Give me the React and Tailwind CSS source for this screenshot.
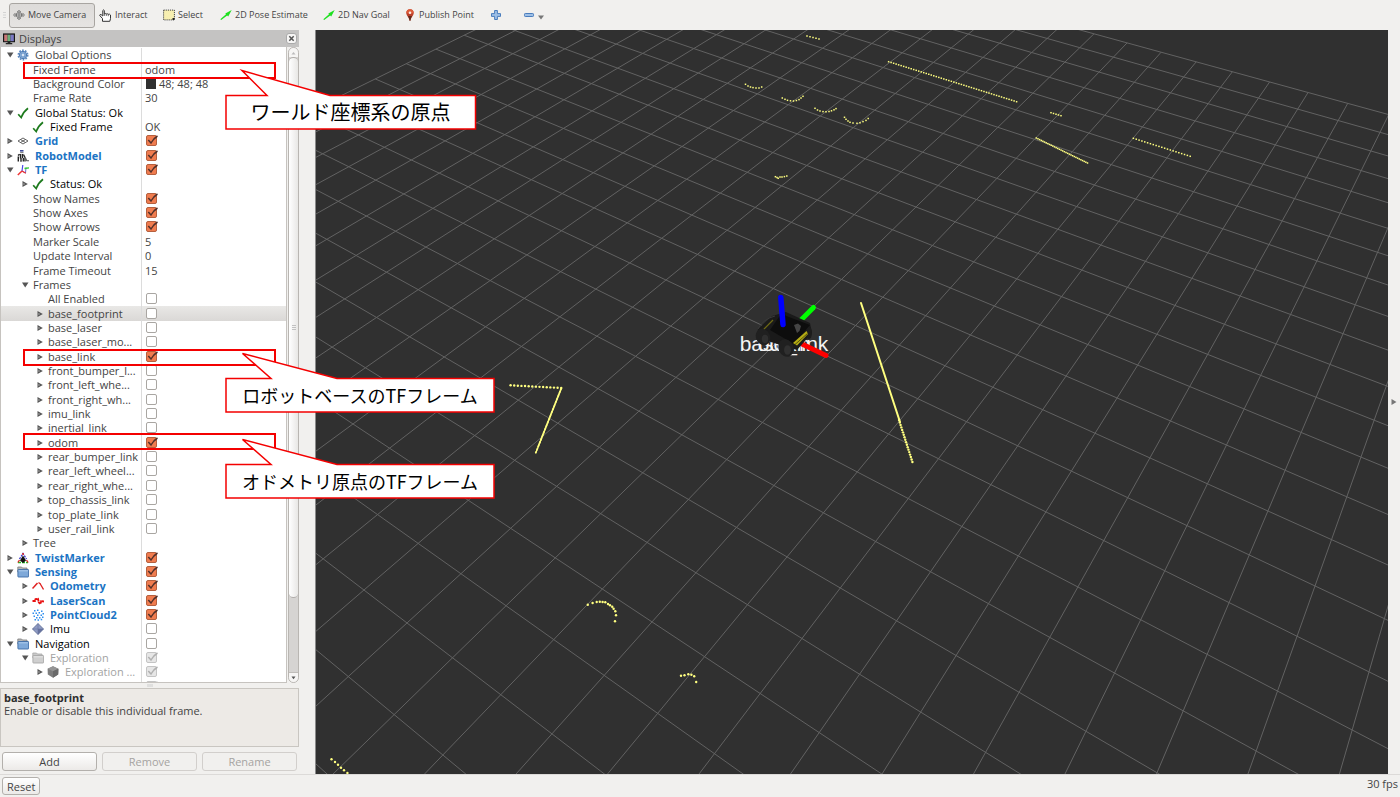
import React from "react";

/* ---------- 3D view ---------- */

// Perspective of the ground plane: grid cell (i, j) -> view coordinates.
function project(i, j) {
  const w = -0.0305002 * i + 0.0462399 * j + 1;
  return [
    850 + (400 * (0.1545719 * i + 0.1021849 * j - 0.7451531)) / w,
    400 + (400 * (0.075397 * i - 0.1142941 * j + 0.8346067)) / w,
  ];
}

const I_MIN = -17;
const I_MAX = 12;
const J_MIN = -4;
const J_MAX = 23;

const gridLines = [];
for (let j = J_MIN; j <= J_MAX; j++) gridLines.push([project(I_MIN, j), project(I_MAX, j)]);
for (let i = I_MIN; i <= I_MAX; i++) gridLines.push([project(i, J_MIN), project(i, J_MAX)]);

function dots(x1, y1, x2, y2, n) {
  return Array.from({ length: n }, (_, k) => [
    x1 + ((x2 - x1) * k) / (n - 1),
    y1 + ((y2 - y1) * k) / (n - 1),
  ]);
}

const smallPoints = [
  ...dots(807, 36, 819, 39, 5),
  [745.5, 84.3], [748, 86], [750.5, 87], [753, 87.6], [756, 88], [759, 88], [761.7, 87],
  [782.3, 98], [785, 99.3], [787.5, 100.3], [790.5, 100.8], [793.5, 101], [796.4, 100.5], [799, 99.6], [801, 98], [803, 96.3],
  [815, 108.3], [817.5, 110], [820, 111], [823, 111.6], [826, 111.8], [829, 111.5], [831.5, 110.8], [834, 109.8], [836, 108.6],
  [844.5, 117.3], [846, 119.3], [848, 121], [850, 122.3], [853, 123], [857, 123.3], [860, 122.8], [863, 121.6], [866, 120.4], [868.2, 118.5],
  [775.4, 176.7], [777, 177.5], [778.2, 178.3], [780, 177], [782, 177], [784.4, 176.6], [786.8, 176],
  ...dots(888.6, 61.7, 1016.6, 101.7, 52),
  ...dots(1051, 112.7, 1061, 115.7, 5),
  ...dots(1036.3, 138, 1087.5, 163, 32),
  ...dots(1133.4, 138.3, 1190.2, 156.3, 21),
];

const bigPoints = [
  ...dots(510.6, 385.3, 561.2, 388, 15),
  ...dots(899, 420, 912.4, 462, 18),
  [587.8, 604.7], [592.6, 603], [596.7, 602], [599.8, 601.7], [602.6, 602], [605.3, 602.3], [608, 604],
  [610, 605.3], [612.2, 606.7], [613.6, 608.7], [615.3, 611.3], [616, 615.3], [615, 621.3],
  [681, 675.7], [684.5, 675.3], [688.3, 674.3], [691.4, 674.7], [694.2, 676.3], [696.2, 682],
  [331.5, 759.3], [335, 762], [338, 764.7], [341, 767.7], [344, 770.3], [347.4, 773],
];

function Viewport() {
  return (
    <svg
      className="block h-full w-full bg-[#303030]"
      viewBox="316 30 1072 744"
      preserveAspectRatio="xMidYMid slice"
      role="img"
      aria-label="3D view"
    >
      <g stroke="#626262" strokeWidth="1">
        {gridLines.map(([a, b], k) => (
          <line key={k} x1={a[0]} y1={a[1]} x2={b[0]} y2={b[1]} />
        ))}
      </g>
      <g fill="#ffff80">
        {smallPoints.map(([x, y], k) => (
          <rect key={k} x={x - 0.75} y={y - 0.75} width="1.5" height="1.5" />
        ))}
        {bigPoints.map(([x, y], k) => (
          <circle key={k} cx={x} cy={y} r="1.2" />
        ))}
      </g>
      <g stroke="#ffff80" strokeLinecap="round">
        <line x1="861" y1="303" x2="900" y2="422" strokeWidth="2" />
        <line x1="561.4" y1="388" x2="535.8" y2="452.7" strokeWidth="1.8" strokeDasharray="2 1.6" />
        <line x1="561.4" y1="388" x2="538" y2="447" strokeWidth="1.2" />
      </g>

      <g fill="#f4f4f4" fontFamily="'Liberation Sans', sans-serif" fontSize="21" textAnchor="middle">
        <text x="784" y="351">base_link</text>
        <text x="784" y="351">odom</text>
      </g>
      {/* robot */}
      <line x1="803" y1="344.5" x2="826" y2="355.5" stroke="#f00" strokeWidth="5" strokeLinecap="round" />
      <line x1="800" y1="321" x2="813.5" y2="307.5" stroke="#0f0" strokeWidth="5" strokeLinecap="round" />
      <path d="M758 329 L772 316 L786 312 L810 323 L812 333 L797 350 L774 343 L757 338 Z" fill="#1a1a1a" />
      <path d="M770 330 L781 314 L810 325 L794 344 Z" fill="#0d0d0d" />
      <path d="M758 329 Q763 319 775 316" fill="none" stroke="#3a3a3a" strokeWidth="1" />
      <path d="M762 331 L773 320" stroke="#6f6a14" strokeWidth="1.2" />
      <ellipse cx="763" cy="337" rx="7" ry="8.5" fill="#202020" transform="rotate(-25 763 337)" />
      <ellipse cx="765" cy="339" rx="3.2" ry="4.2" fill="#2f2f2f" />
      <ellipse cx="786" cy="348" rx="7.5" ry="9" fill="#202020" transform="rotate(-25 786 348)" />
      <ellipse cx="787.5" cy="350" rx="3.4" ry="4.8" fill="#303030" />
      <ellipse cx="809" cy="333" rx="3" ry="6" fill="#1c1c1c" />
      <path d="M793 343 L806.5 331 L808 334 L797 345.5 Z" fill="#b4ac14" />
      <path d="M795 344.5 L807.5 333.5" stroke="#3c3a0c" strokeWidth="0.8" />
      <path d="M794 325 L798 323.5 L801 326 L799.5 331 L797 333 L795.5 329 Z" fill="#454545" />
      <line x1="780.8" y1="297.5" x2="783" y2="324.5" stroke="#00f" strokeWidth="5.5" strokeLinecap="round" />
    </svg>
  );
}

/* ---------- icons ---------- */

const box = { className: "block h-3 w-3 shrink-0", viewBox: "0 0 12 12", fill: "none", "aria-hidden": true };

function CheckMark() {
  return <svg {...box}><path d="M1.2 7.2 L4.2 10.5 Q6.5 4.5 11 1.2" stroke="#1d7a1d" strokeWidth="1.7" /></svg>;
}
function GearIcon() {
  return (
    <svg {...box}>
      <circle cx="6" cy="6" r="4.7" stroke="#5b89c0" strokeWidth="1.6" strokeDasharray="1.7 1.25" />
      <circle cx="6" cy="6" r="3.7" fill="#8fb3dc" stroke="#4c7ab3" strokeWidth="1" />
      <path d="M3 6 H9 M6 3 V9 M4 4 L8 8 M8 4 L4 8" stroke="#5b89c0" strokeWidth="0.6" />
      <circle cx="6" cy="6" r="1.2" fill="#dbe7f5" />
    </svg>
  );
}
function GridIcon() {
  return (
    <svg {...box}>
      <path d="M1 6 L6 3 L11 6 L6 9 Z M3.5 4.5 L8.5 7.5 M8.5 4.5 L3.5 7.5" stroke="#555" strokeWidth="0.9" />
    </svg>
  );
}
function RobotIcon() {
  return (
    <svg {...box}>
      <rect x="3" y="0" width="3.5" height="1.6" fill="#3a4a9a" />
      <path d="M3.2 2.6 H6.5" stroke="#777" strokeWidth="1" />
      <path d="M1 5.5 L2.5 4.2 M3.5 4 V8.5 M5.5 4 V8 M1.3 6.5 V11.5 M4 8 V11.8" stroke="#222" strokeWidth="1.4" />
      <path d="M6.5 4.5 L8 7.5 V11.5 M6.3 8 V11.5" stroke="#222" strokeWidth="1.3" />
      <path d="M8.5 8 L9.8 10.8 H12" stroke="#555" strokeWidth="1.1" />
    </svg>
  );
}
function TfIcon() {
  return (
    <svg {...box}>
      <path d="M5 7 L5.8 1" stroke="#4a4ae8" strokeWidth="1.2" />
      <path d="M5 7 L0.8 11" stroke="#e33" strokeWidth="1.5" />
      <path d="M5 7 L8.5 9 L9 3.5" stroke="#55c" strokeWidth="0.9" />
      <path d="M5 7 L8.8 9.2" stroke="#e33" strokeWidth="1.3" />
      <path d="M7.5 4.5 L12 3.8" stroke="#3c3" strokeWidth="1.3" />
    </svg>
  );
}
function TwistIcon() {
  return (
    <svg {...box}>
      <path d="M2.5 7 L6 1.5 L9.5 7" stroke="#33c" strokeWidth="1.3" strokeDasharray="2 1" />
      <path d="M1 10.5 H11" stroke="#2b2" strokeWidth="1.5" strokeDasharray="3 1" />
      <path d="M3 8.5 L6 3.5 L9 8.5 L6 11 Z" fill="#111" />
      <path d="M0.8 10.5 L2.5 8 M11.2 10.5 L9.5 8 M5 2 H7" stroke="#d22" strokeWidth="1.3" />
    </svg>
  );
}
function FolderIcon({ gray }) {
  return (
    <svg {...box}>
      <path d="M0.8 1 H4.5 L5.5 2 H10 V6 H0.8 Z" fill={gray ? "#c9c9c9" : "#b8b8b8"} stroke={gray ? "#a8a8a8" : "#7c7c7c"} strokeWidth="0.8" />
      <rect x="0.9" y="3.5" width="10.7" height="7.5" rx="0.6" fill={gray ? "#cfcfcf" : "#7fa9d9"} stroke={gray ? "#a8a8a8" : "#3d6ca6"} strokeWidth="0.9" />
      <path d="M1.6 4.8 H10.9" stroke={gray ? "#e6e6e6" : "#b4d0ee"} strokeWidth="0.9" />
    </svg>
  );
}
function OdometryIcon() {
  return (
    <svg {...box}>
      <path d="M0.5 8.5 L5.5 3" stroke="#e02020" strokeWidth="1.5" />
      <path d="M6.5 2.5 L8.5 4 M8 3.5 L11.5 9.5" stroke="#e02020" strokeWidth="1.3" />
    </svg>
  );
}
function LaserIcon() {
  return <svg {...box}><path d="M0.5 6 H3 L3.5 4 L6 3.8 L6.8 7.5 L8.5 8.8 L9.2 6 L12 6.5" stroke="#e81010" strokeWidth="1.8" strokeDasharray="3 0.3" /></svg>;
}
function CloudIcon() {
  return (
    <svg {...box}>
      <g fill="#2f8eee">
        {[[2, 1], [5, 0.5], [9, 1.5], [0.5, 3.5], [3.5, 3.5], [6.5, 3], [10.5, 4], [5, 5.5], [8.5, 5.5], [1.5, 6.5], [4, 8], [7, 8], [10, 7.5], [2.5, 10], [5.5, 10.3], [8.7, 9.8]].map(([x, y], k) => (
          <rect key={k} x={x} y={y} width="1.5" height="1.5" />
        ))}
      </g>
    </svg>
  );
}
function ImuIcon() {
  return (
    <svg {...box}>
      <path d="M6 0.5 L11.5 6 L6 11.5 L0.5 6 Z" fill="#8f9bc4" stroke="#5c678f" strokeWidth="0.8" />
      <path d="M6 0.5 L6 6 L0.5 6 M6 6 L11.5 6 M6 6 L6 11.5" stroke="#6a75a0" strokeWidth="0.6" />
      <path d="M6 6 L11.5 6 L6 11.5 Z" fill="#66729e" />
    </svg>
  );
}
function CubeIcon() {
  return (
    <svg {...box}>
      <path d="M6 0.3 L11.4 2.8 L11.2 8.5 L6 11.8 L0.8 8.5 L0.6 2.8 Z" fill="#7d7d7d" />
      <path d="M6 0.3 L11.4 2.8 L6 5.3 L0.6 2.8 Z" fill="#959595" />
      <path d="M6 5.3 V11.8 L11.2 8.5 L11.4 2.8 Z" fill="#6a6a6a" />
    </svg>
  );
}
function MapIcon() {
  return <svg {...box}><path d="M0 1 H6 V12 H0 Z M8 1 H11 V12 H8 Z" fill="#8a8a8a" /></svg>;
}
function DisplaysIcon() {
  return (
    <svg className="block h-3 w-3 shrink-0" viewBox="0 0 13 12" aria-hidden="true">
      <rect x="0.5" y="0.5" width="12" height="8.5" fill="#222" stroke="#111" />
      <rect x="1.3" y="1.3" width="3.6" height="7" fill="#c97878" />
      <rect x="4.9" y="1.3" width="3.2" height="7" fill="#6fae78" />
      <rect x="8.1" y="1.3" width="3.6" height="7" fill="#7a78c4" />
      <path d="M5 9 H8 V10.3 H10 V11.7 H3 V10.3 H5 Z" fill="#222" />
    </svg>
  );
}
function MoveIcon() {
  return (
    <svg className="h-3 w-3 shrink-0" viewBox="0 0 14 12" fill="none" aria-hidden="true">
      <path d="M7 0.5 L9 2.3 H5 Z M7 11.5 L9 9.7 H5 Z M0.5 6 L2.5 4.2 V7.8 Z M13.5 6 L11.5 4.2 V7.8 Z" fill="#fff" stroke="#555" strokeWidth="0.8" />
      <rect x="4.2" y="3.6" width="5.6" height="4.8" rx="1" fill="#ddd" stroke="#555" strokeWidth="0.9" />
      <circle cx="7" cy="6" r="1.3" stroke="#555" strokeWidth="0.8" />
      <path d="M3 5 H4.2 M3 7 H4.2 M9.8 5 H11 M9.8 7 H11" stroke="#555" strokeWidth="0.7" />
    </svg>
  );
}
function HandIcon() {
  return (
    <svg className="h-[13px] w-[13px] shrink-0" viewBox="0 0 13 13" aria-hidden="true">
      <path d="M3.5 12.3 V9.5 L0.7 6.5 Q0.6 5.2 2.2 5.7 L3.8 7 V1.5 Q4.5 0.3 5.3 1.5 V5 Q6.2 4 7.2 5 Q8.2 4.3 9.2 5.3 Q10.5 4.7 11.5 6 V9.5 L10.8 12.3 Z" fill="#fff" stroke="#333" strokeWidth="1" />
      <path d="M5.3 5 V7 M7.3 5.2 V7 M9.3 5.5 V7.2" stroke="#333" strokeWidth="0.7" />
    </svg>
  );
}
function SelectIcon() {
  return (
    <svg className="h-3 w-3 shrink-0" viewBox="0 0 12 12" aria-hidden="true">
      <rect x="0.6" y="1.1" width="10.8" height="9.8" fill="#f7efb0" stroke="#444" strokeWidth="1" strokeDasharray="1.2 0.9" />
      <rect x="9.5" y="9" width="2" height="2" fill="#222" />
    </svg>
  );
}
function ArrowIcon() {
  return (
    <svg className="h-3 w-3 shrink-0" viewBox="0 0 12 12" aria-hidden="true">
      <path d="M0.3 10.3 L6 5.2 L5.3 4.4 L11.7 1 L8.2 7.4 L7.2 6.4 L1.2 11 Z" fill="#1fe01f" />
    </svg>
  );
}
function PinIcon() {
  return (
    <svg className="h-3 w-2 shrink-0" viewBox="0 0 8 12" aria-hidden="true">
      <path d="M4 0.3 C1.5 0.3 0.3 2 0.3 3.9 C0.3 6.5 3 8 3.6 11.8 H4.4 C5 8 7.7 6.5 7.7 3.9 C7.7 2 6.5 0.3 4 0.3 Z" fill="#b9402a" />
      <path d="M0.3 3.9 C0.3 2 1.5 0.3 4 0.3 C6.5 0.3 7.7 2 7.7 3.9 Q4 5.5 0.3 3.9 Z" fill="#dd5a38" />
      <path d="M2 7 Q3.3 9 3.6 11.8 H4.4 Q4.7 9 6 7 Z" fill="#5e2a1c" />
      <circle cx="4" cy="3.7" r="1.3" fill="#fbe9e4" />
    </svg>
  );
}
function PlusIcon() {
  return (
    <svg className="h-3 w-3 shrink-0" viewBox="0 0 12 12" aria-hidden="true">
      <path d="M4.6 1.5 H7.4 V4.6 H10.5 V7.4 H7.4 V10.5 H4.6 V7.4 H1.5 V4.6 H4.6 Z" fill="#9dbfe6" stroke="#4a7dbd" strokeWidth="1" strokeLinejoin="round" />
    </svg>
  );
}
function MinusIcon() {
  return (
    <svg className="h-3 w-3 shrink-0" viewBox="0 0 12 12" aria-hidden="true">
      <rect x="1.5" y="4.5" width="9" height="3" rx="0.8" fill="#9dbfe6" stroke="#4a7dbd" strokeWidth="1" />
    </svg>
  );
}

/* ---------- display tree ---------- */

const rows = [
  { d: 0, arrow: "open", icon: <GearIcon />, name: "Global Options" },
  { d: 1, name: "Fixed Frame", value: "odom" },
  { d: 1, name: "Background Color", value: "48; 48; 48", swatch: true },
  { d: 1, name: "Frame Rate", value: "30" },
  { d: 0, arrow: "open", icon: <CheckMark />, name: "Global Status: Ok", tone: "black" },
  { d: 1, icon: <CheckMark />, name: "Fixed Frame", tone: "black", value: "OK" },
  { d: 0, arrow: "closed", icon: <GridIcon />, name: "Grid", tone: "blue", check: true },
  { d: 0, arrow: "closed", icon: <RobotIcon />, name: "RobotModel", tone: "blue", check: true },
  { d: 0, arrow: "open", icon: <TfIcon />, name: "TF", tone: "blue", check: true },
  { d: 1, arrow: "closed", icon: <CheckMark />, name: "Status: Ok", tone: "black" },
  { d: 1, name: "Show Names", check: true },
  { d: 1, name: "Show Axes", check: true },
  { d: 1, name: "Show Arrows", check: true },
  { d: 1, name: "Marker Scale", value: "5" },
  { d: 1, name: "Update Interval", value: "0" },
  { d: 1, name: "Frame Timeout", value: "15" },
  { d: 1, arrow: "open", name: "Frames" },
  { d: 2, name: "All Enabled", check: false },
  { d: 2, arrow: "closed", name: "base_footprint", check: false, selected: true },
  { d: 2, arrow: "closed", name: "base_laser", check: false },
  { d: 2, arrow: "closed", name: "base_laser_mo...", check: false },
  { d: 2, arrow: "closed", name: "base_link", check: true },
  { d: 2, arrow: "closed", name: "front_bumper_l...", check: false },
  { d: 2, arrow: "closed", name: "front_left_whe...", check: false },
  { d: 2, arrow: "closed", name: "front_right_wh...", check: false },
  { d: 2, arrow: "closed", name: "imu_link", check: false },
  { d: 2, arrow: "closed", name: "inertial_link", check: false },
  { d: 2, arrow: "closed", name: "odom", check: true },
  { d: 2, arrow: "closed", name: "rear_bumper_link", check: false },
  { d: 2, arrow: "closed", name: "rear_left_wheel...", check: false },
  { d: 2, arrow: "closed", name: "rear_right_whe...", check: false },
  { d: 2, arrow: "closed", name: "top_chassis_link", check: false },
  { d: 2, arrow: "closed", name: "top_plate_link", check: false },
  { d: 2, arrow: "closed", name: "user_rail_link", check: false },
  { d: 1, arrow: "closed", name: "Tree" },
  { d: 0, arrow: "closed", icon: <TwistIcon />, name: "TwistMarker", tone: "blue", check: true },
  { d: 0, arrow: "open", icon: <FolderIcon />, name: "Sensing", tone: "blue", check: true },
  { d: 1, arrow: "closed", icon: <OdometryIcon />, name: "Odometry", tone: "blue", check: true },
  { d: 1, arrow: "closed", icon: <LaserIcon />, name: "LaserScan", tone: "blue", check: true },
  { d: 1, arrow: "closed", icon: <CloudIcon />, name: "PointCloud2", tone: "blue", check: true },
  { d: 1, arrow: "closed", icon: <ImuIcon />, name: "Imu", tone: "black", check: false },
  { d: 0, arrow: "open", icon: <FolderIcon />, name: "Navigation", tone: "black", check: false },
  { d: 1, arrow: "open", icon: <FolderIcon gray />, name: "Exploration", tone: "gray", check: true, disabled: true },
  { d: 2, arrow: "closed", icon: <CubeIcon />, name: "Exploration ...", tone: "gray", check: true, disabled: true },
  { d: 2, icon: <MapIcon />, name: "Exploration ...", tone: "gray", check: true, disabled: true },
];

const indent = ["pl-[3px]", "pl-[18px]", "pl-[33px]"];
const tones = {
  black: "text-black",
  blue: "font-bold text-[#1b74c4]",
  gray: "text-[#a3a3a3]",
};

function Expander({ state }) {
  return (
    <svg className="block h-[10px] w-3 shrink-0" viewBox="0 0 12 10" aria-hidden="true">
      {state === "open" && <path d="M3 2.5 H9.5 L6.2 7.5 Z" fill="#555" />}
      {state === "closed" && (
        <>
          <path d="M3.5 2 L8.8 5 L3.5 8 Z" fill="#555" />
          <path d="M4.5 4 L6 5 L4.5 6 Z" fill="#bbb" />
        </>
      )}
    </svg>
  );
}

function Check({ label, on, disabled }) {
  const face = disabled
    ? "border-[#c4c4c4] bg-[#e6e6e6]"
    : on
      ? "border-[#b5603f] bg-[#f07c4f]"
      : "border-[#a9a6a2] bg-white";
  return (
    <span className="relative block h-3 w-3">
      <input
        type="checkbox"
        aria-label={label}
        defaultChecked={on}
        disabled={disabled}
        className={`block h-[11px] w-[11px] appearance-none rounded-[2px] border ${face}`}
      />
      {on && (
        <svg className="pointer-events-none absolute left-0 top-0 h-3 w-3" viewBox="0 0 12 12" fill="none" aria-hidden="true">
          <path d="M2.3 5 L5 8 Q7.5 3.5 11.5 1" stroke={disabled ? "#b0b0b0" : "#51302a"} strokeWidth="1.5" />
        </svg>
      )}
    </span>
  );
}

function TreeRow({ row }) {
  return (
    <li
      className={`grid min-h-0 grid-cols-[141px_1fr] items-stretch ${
        row.selected ? "bg-linear-to-b from-[#e9e8e6] to-[#dad8d6]" : ""
      }`}
    >
      <span className={`flex min-w-0 items-center border-r border-[#dcdcdc] ${indent[row.d]} ${tones[row.tone] || ""}`}>
        <Expander state={row.arrow} />
        {row.icon && <span className="ml-px mr-1">{row.icon}</span>}
        <span className="whitespace-nowrap pl-[2px] leading-[14px]">{row.name}</span>
      </span>
      <span className="flex items-center gap-[3px] pl-[3px] leading-[14px]">
        {row.check !== undefined && <span className="pl-px"><Check label={row.name} on={row.check} disabled={row.disabled} /></span>}
        {row.swatch && <span className="ml-px h-[11px] w-[10px] bg-[#303030]" />}
        {row.value && <span>{row.value}</span>}
      </span>
    </li>
  );
}

function ScrollBar() {
  return (
    <div className="flex w-[11px] shrink-0 flex-col rounded-full border border-[#b9b6b2] bg-[#d6d4d2]" aria-hidden="true">
      <div className="flex h-[9px] items-center justify-center rounded-t-full bg-[#f6f5f4]">
        <svg className="h-1 w-[5px]" viewBox="0 0 5 4"><path d="M2.5 1 L4.5 3.5 H0.5 Z" fill="#bbb" /></svg>
      </div>
      <div className="flex h-[541px] items-center justify-center rounded-full border-y border-[#b0adaa] bg-linear-to-r from-white to-[#e8e7e5]">
        <svg className="h-[7px] w-1" viewBox="0 0 4 7"><path d="M0 1.5 H4 M0 3.5 H4 M0 5.5 H4" stroke="#b5b5b5" strokeWidth="0.8" /></svg>
      </div>
      <div className="flex-1" />
      <div className="flex h-[10px] items-center justify-center rounded-b-full border-t border-[#c0bdba] bg-[#f6f5f4]">
        <svg className="h-1 w-[5px]" viewBox="0 0 5 4"><path d="M0.5 0.5 H4.5 L2.5 3.3 Z" fill="#555" /></svg>
      </div>
    </div>
  );
}

function PanelButton({ children, disabled }) {
  return (
    <button
      type="button"
      disabled={disabled}
      className="h-[19px] flex-1 rounded-[3px] border border-[#b3b0ac] bg-linear-to-b from-white to-[#eceae8] leading-none disabled:border-[#d2cfcc] disabled:bg-none disabled:text-[#a5a3a1]"
    >
      {children}
    </button>
  );
}

/* ---------- annotations ---------- */

function Callout({ frame, place, width, path, size, viewBox, children }) {
  return (
    <>
      <div className={`pointer-events-none absolute left-[23px] h-[17px] w-[253px] border-2 border-[#f40000] ${frame}`} />
      <div className={`pointer-events-none absolute left-[225px] flex h-[61px] items-end ${place} ${width}`}>
        <svg className="absolute inset-0 h-full w-full overflow-visible" viewBox={viewBox} aria-hidden="true">
          <path d={path} fill="#fff" stroke="#f40000" strokeWidth="1.5" />
        </svg>
        <p className={`relative flex h-9 w-full items-center justify-center whitespace-nowrap font-['Noto_Sans_CJK_JP',sans-serif] leading-none text-black ${size}`}>
          {children}
        </p>
      </div>
    </>
  );
}

const WIDE_TAIL = "M1 26.5 H46 L17.5 1.5 L112 26.5 H269 V60 H1 Z";

/* ---------- page ---------- */

const toolButton = "flex h-6 shrink-0 items-center gap-[3px]";

export default function App() {
  return (
    <div className="relative flex h-screen flex-col overflow-hidden bg-[#f1f0ee] font-['Open_Sans','Noto_Sans',sans-serif] text-[11px] leading-[14px] text-[#444444]">
      <header className="flex h-[30px] shrink-0 items-center pl-[3px] text-[9px]">
        <svg className="h-2 w-[3px] shrink-0" viewBox="0 0 3 8" aria-hidden="true"><path d="M0 1.5 H3 M0 4 H3 M0 6.5 H3" stroke="#ccc" strokeWidth="0.8" /></svg>
        <button type="button" aria-pressed="true" className="ml-[3px] flex h-[25px] w-[86px] shrink-0 items-center gap-[3px] whitespace-nowrap rounded-[3px] border border-[#a8a5a1] bg-linear-to-b from-[#dddbd9] to-[#e6e4e2] pl-[3px]">
          <MoveIcon />
          Move Camera
        </button>
        <button type="button" className={`${toolButton} ml-1 w-[64px]`}><HandIcon />Interact</button>
        <button type="button" className={`${toolButton} w-[57px]`}><SelectIcon />Select</button>
        <button type="button" className={`${toolButton} w-[103px] whitespace-nowrap`}><ArrowIcon />2D Pose Estimate</button>
        <button type="button" className={`${toolButton} w-[83px] whitespace-nowrap`}><ArrowIcon />2D Nav Goal</button>
        <button type="button" className={`${toolButton} w-[84px] whitespace-nowrap`}><PinIcon /><span className="pl-[2px]">Publish Point</span></button>
        <button type="button" aria-label="Add tool" className={`${toolButton} w-[33px]`}><PlusIcon /></button>
        <button type="button" aria-label="Remove tool" className={toolButton}>
          <MinusIcon />
          <svg className="mt-1 h-[5px] w-[6px]" viewBox="0 0 6 5" aria-hidden="true"><path d="M0 0.5 H6 L3 4.5 Z" fill="#777" /></svg>
        </button>
      </header>

      <main className="flex min-h-0 flex-1">
        <aside className="flex w-[299px] shrink-0 flex-col">
          <h2 className="flex h-[17px] shrink-0 items-center gap-1 bg-[#c4c3c2] pl-[3px] pr-[2px]">
            <DisplaysIcon />
            <span className="flex-1">Displays</span>
            <button type="button" aria-label="Close" className="flex h-[11px] w-[11px] items-center justify-center rounded-[3px] border border-[#aaa] bg-[#f6f5f4]">
              <svg className="h-[7px] w-[7px]" viewBox="0 0 7 7" aria-hidden="true"><path d="M1.3 1.3 L5.7 5.7 M5.7 1.3 L1.3 5.7" stroke="#555" strokeWidth="1.5" /></svg>
            </button>
          </h2>
          <div className="flex min-h-0 flex-1 gap-px">
            <div className="min-w-0 flex-1 overflow-hidden border-x border-b border-[#c6c3bf] bg-white">
              <ul className="grid h-[647px] auto-rows-fr pt-px">
                {rows.map((row, k) => (
                  <TreeRow key={k} row={row} />
                ))}
              </ul>
            </div>
            <ScrollBar />
          </div>
          <div className="flex h-[5px] shrink-0 items-center justify-center">
            <svg className="h-[3px] w-[6px]" viewBox="0 0 6 3" aria-hidden="true"><path d="M1 0 V3 M3 0 V3 M5 0 V3" stroke="#c4c4c4" strokeWidth="0.8" /></svg>
          </div>
          <section className="h-[59px] shrink-0 border border-[#c9c6c1] bg-[#edeae6] px-[3px] pt-[2px] leading-[13px]">
            <h3 className="font-bold text-[#2e2e2e]">base_footprint</h3>
            <p>Enable or disable this individual frame.</p>
          </section>
          <div className="flex h-[27px] shrink-0 items-center gap-[5px] px-[2px] pt-px">
            <PanelButton>Add</PanelButton>
            <PanelButton disabled>Remove</PanelButton>
            <PanelButton disabled>Rename</PanelButton>
          </div>
        </aside>
        <div className="w-4 shrink-0" />
        <div className="min-w-0 flex-1 border-l border-[#8a8a8a]">
          <Viewport />
        </div>
        <button type="button" aria-label="Show right panels" className="flex w-3 shrink-0 items-center justify-center">
          <svg className="h-2 w-[6px]" viewBox="0 0 6 8" aria-hidden="true"><path d="M0.5 1 L5.5 4 L0.5 7 Z" fill="#777" /></svg>
        </button>
      </main>

      <footer className="flex h-[23px] shrink-0 items-center justify-between border-t border-[#dcdad8] px-[2px]">
        <button type="button" className="h-[18px] rounded-[3px] border border-[#b3b0ac] bg-linear-to-b from-white to-[#eceae8] px-1 leading-none">Reset</button>
        <span className="pb-1">30 fps</span>
      </footer>

      <Callout frame="top-[62px]" place="top-[69px]" width="w-[251px]" size="text-xl" viewBox="0 0 251 61" path="M1 26.5 H42 L17 1.5 L105 26.5 H250.5 V60 H1 Z">
        ワールド座標系の原点
      </Callout>
      <Callout frame="top-[349px]" place="top-[352px]" width="w-[270px]" size="text-lg" viewBox="0 0 270 61" path={WIDE_TAIL}>
        ロボットベースのTFフレーム
      </Callout>
      <Callout frame="top-[433px]" place="top-[438px]" width="w-[270px]" size="text-lg" viewBox="0 0 270 61" path={WIDE_TAIL}>
        オドメトリ原点のTFフレーム
      </Callout>
    </div>
  );
}
